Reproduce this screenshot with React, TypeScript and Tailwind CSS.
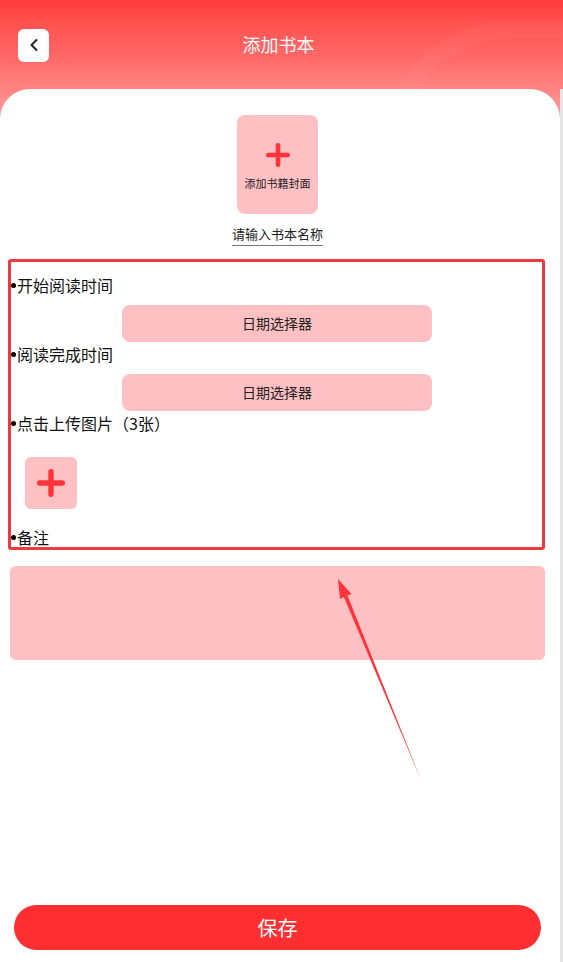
import { ChevronLeft } from 'lucide-react';

const font = { fontFamily: '"Noto Sans CJK SC", "Noto Sans", sans-serif' };

function Plus({ size = 26, stroke = 6 }: { size?: number; stroke?: number }) {
  return (
    <svg width={size} height={size} viewBox="0 0 26 26">
      <path d={`M13 ${stroke / 2}V${26 - stroke / 2}M${stroke / 2} 13H${26 - stroke / 2}`} stroke="#ff3338" strokeWidth={stroke} strokeLinecap="round" fill="none" />
    </svg>
  );
}

function Field({ label }: { label: string }) {
  return (
    <div className="flex items-center h-6 text-[16px] text-[#111] leading-6">
      <span className="w-[5px] h-[5px] rounded-full bg-black mr-px" />
      {label}
    </div>
  );
}

function DateButton() {
  return (
    <div className="ml-[111px] mt-2 w-[310px] h-[37px] rounded-lg bg-[#ffc0c3] flex items-center justify-center text-[14px] text-[#222]">
      日期选择器
    </div>
  );
}

export default function App() {
  return (
    <div style={font} className="relative w-[563px] h-[962px] overflow-hidden bg-[#fffdfd]">
      {/* header */}
      <div className="relative h-[120px] bg-gradient-to-b from-[#ff3d3d] via-[#ff6a6a] to-[#ff9d9d] overflow-hidden">
        <div className="absolute right-[-120px] top-[20px] w-[300px] h-[260px] rounded-full border-[18px] border-white/[0.03]" />
        <div className="flex items-center h-[90px] px-[18px]">
          <div className="w-[31px] h-[33px] bg-white rounded-md flex items-center justify-center">
            <ChevronLeft size={20} strokeWidth={2.4} color="#222" />
          </div>
          <div className="flex-1 text-center text-white text-[18px] pr-[37px] -mt-[1px]">添加书本</div>
        </div>
      </div>

      {/* card */}
      <div className="absolute left-0 top-[89px] w-[560px] h-[873px] bg-white rounded-t-[30px] flex flex-col items-center pr-[5px]">
        <div className="mt-[26px] w-[81px] h-[99px] rounded-lg bg-[#ffc0c3] flex flex-col items-center">
          <div className="mt-[28px]"><Plus size={24} stroke={5} /></div>
          <div className="mt-[8px] text-[11px] text-[#222] leading-4">添加书籍封面</div>
        </div>
        <div className="mt-[10px] text-[13px] text-[#222] leading-5 border-b border-[#777] pb-[1px]">请输入书本名称</div>

        <div className="self-start ml-[8px] mt-[13px] w-[537px] h-[291px] border-[3px] border-[#ee3a3f] rounded-[3px] overflow-hidden">
          <div className="mt-[11px]" />
          <Field label="开始阅读时间" />
          <DateButton />
          <Field label="阅读完成时间" />
          <DateButton />
          <Field label="点击上传图片（3张）" />
          <div className="ml-[14px] mt-[22px] w-[52px] h-[52px] rounded-md bg-[#ffc0c3] flex items-center justify-center">
            <Plus size={28} stroke={5} />
          </div>
          <div className="mt-[16px]">
            <Field label="备注" />
          </div>
        </div>

        <div className="self-start ml-[10px] mt-[16px] w-[535px] h-[94px] rounded-md bg-[#ffc0c3]" />

        <div className="mt-auto mb-[12px] self-start ml-[14px] w-[527px] h-[45px] rounded-full bg-[#ff2f31] flex items-center justify-center text-white text-[20px]">
          保存
        </div>
      </div>

      {/* right edge strip */}
      <div className="absolute right-0 top-[89px] w-[3px] h-[873px] bg-[#e6e6e6]" />

      {/* annotation arrow */}
      <svg className="absolute left-0 top-0 pointer-events-none" width="563" height="962">
        <polygon points="338,579 351.5,594 347.5,595.5 421,780 343.9,597 340,599" fill="#ff3338" />
      </svg>
    </div>
  );
}
